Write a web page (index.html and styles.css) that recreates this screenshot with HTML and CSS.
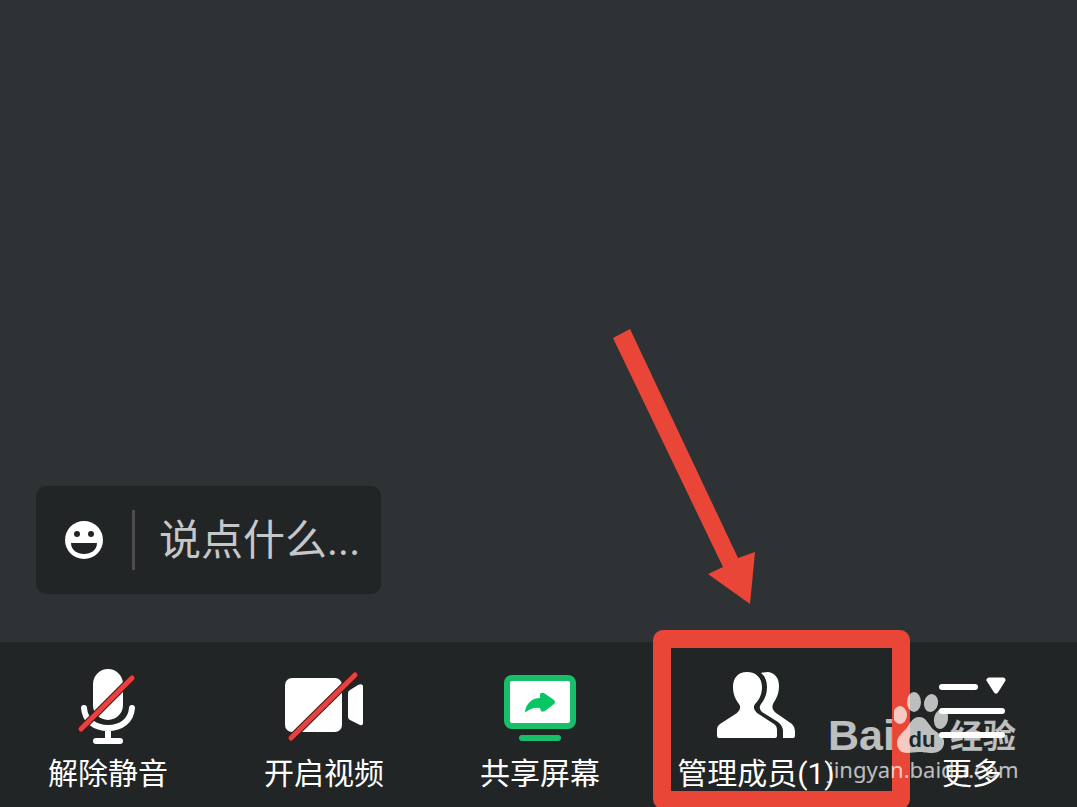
FILE: index.html
```html
<!DOCTYPE html>
<html lang="zh-CN">

<head>
    <meta charset="UTF-8">
    <meta name="viewport" content="width=device-width, initial-scale=1.0">
    <title>会议</title>
    <link rel="stylesheet" href="styles.css">
</head>

<body>
    <main class="stage">
        <form class="chat">
            <button type="button" class="emoji" aria-label="表情">
                <svg viewBox="0 0 38 38">
                    <circle cx="19" cy="19" r="19" fill="#fff" />
                    <circle cx="12" cy="13" r="3" fill="#222526" />
                    <circle cx="26" cy="13" r="3" fill="#222526" />
                    <path d="M6 22H32C32 29 26 33 19 33S6 29 6 22Z" fill="#222526" />
                </svg>
            </button>
            <input type="text" class="say" placeholder="说点什么..." aria-label="说点什么">
        </form>
    </main>

    <nav class="toolbar">
        <button type="button" class="tool">
            <svg class="icon" viewBox="0 0 96 80">
                <rect x="33" y="3" width="30" height="51" rx="15" fill="#fff" />
                <path d="M24 42C25 55 35 62 48 62S71 55 72 42M48 62V75" fill="none" stroke="#fff" stroke-width="6" stroke-linecap="round" />
                <rect x="33" y="72" width="30" height="6" rx="3" fill="#fff" />
                <path d="M21 63L72 12" stroke="#4a1417" stroke-width="7" stroke-linecap="round" />
                <path d="M21 63L72 12" stroke="#e5433f" stroke-width="5" stroke-linecap="round" />
            </svg>
            <span>解除静音</span>
        </button>
        <button type="button" class="tool">
            <svg class="icon" viewBox="0 0 96 80">
                <rect x="9" y="12" width="57" height="54" rx="7" fill="#fff" />
                <path d="M72 27Q72 25 74 24L82 19Q87 17 87 21V57Q87 61 82 58L74 54Q72 53 72 51Z" fill="#fff" />
                <path d="M15 72L79 9" stroke="#4a1417" stroke-width="7" stroke-linecap="round" />
                <path d="M15 72L79 9" stroke="#e5433f" stroke-width="5" stroke-linecap="round" />
            </svg>
            <span>开启视频</span>
        </button>
        <button type="button" class="tool">
            <svg class="icon" viewBox="0 0 96 80">
                <rect x="12" y="9" width="72" height="54" rx="8" fill="#18bf6b" />
                <rect x="18" y="15" width="60" height="42" rx="2" fill="#fff" />
                <rect x="27" y="69" width="42" height="6" rx="3" fill="#18bf6b" />
                <path d="M33 45C35 36 41 32 48 32V28Q49 26 52 27L62 34Q64 36 62 38L53 45Q50 46 49 45L48 42C42 41 38 43 34 46Q33 46 33 45Z" fill="#07c765" />
            </svg>
            <span>共享屏幕</span>
        </button>
        <button type="button" class="tool">
            <svg class="icon" viewBox="0 0 96 80">
                <path d="M39 6C30 6 25 12 25 21C25 29 28 34 31 38Q34 43 29 47L12 58Q9 60 9 64V70Q9 72 11 72H67Q69 72 69 70V64Q69 60 66 58L49 47Q44 43 47 38C51 34 54 29 54 21C54 12 48 6 39 6Z" fill="#fff" />
                <path d="M53 7Q57 6 60 6C67 7 71 12 71 20C71 28 68 33 65 38Q63 43 68 47L84 58Q87 61 87 65V70Q87 72 85 72H75V65Q75 60 70 56L54 46Q50 42 53 38C57 33 59 28 59 21C59 15 57 10 53 7Z" fill="#fff" />
            </svg>
            <span>管理成员(1)</span>
            <i class="highlight"></i>
            <svg class="arrow" viewBox="0 0 142 275">
                <path d="M0 9L17 0L125 229L142 223L137 275L95 245L110 238Z" fill="#e94637" />
            </svg>
        </button>
        <button type="button" class="tool">
            <svg class="icon" viewBox="0 0 96 80">
                <rect x="15" y="18" width="39" height="6" rx="3" fill="#fff" />
                <rect x="15" y="42" width="66" height="6" rx="3" fill="#fff" />
                <rect x="15" y="66" width="66" height="6" rx="3" fill="#fff" />
                <path d="M65 14H79L72 25Z" fill="#fff" stroke="#fff" stroke-width="5" stroke-linejoin="round" />
            </svg>
            <span>更多</span>
        </button>
    </nav>

    <div class="watermark">
        <div class="brand">
            <b class="bai">Bai</b>
            <svg class="paw" viewBox="66 0 56 66">
                <ellipse cx="72" cy="25" rx="7" ry="9" />
                <ellipse cx="86" cy="12" rx="7" ry="10" />
                <ellipse cx="103" cy="13" rx="7" ry="9" transform="rotate(12 103 13)" />
                <ellipse cx="113" cy="29" rx="7" ry="10" transform="rotate(12 113 29)" />
                <path d="M91 27C99 27 100 35 106 40C113 45 117 48 116 54C115 60 110 63 104 63C98 63 95 62 91 62S83 63 79 63C73 63 69 59 69 53C69 47 73 44 78 39C82 34 84 27 91 27Z" />
                <text class="du" x="94" y="57" text-anchor="middle">du</text>
            </svg>
            <b class="jingyan">经验</b>
        </div>
        <span class="site">jingyan.baidu.com</span>
    </div>
</body>

</html>
```
FILE: styles.css
```css
* {
    margin: 0;
    padding: 0;
    box-sizing: border-box;
}

body {
    min-height: 100vh;
    display: flex;
    flex-direction: column;
    position: relative;
    overflow: hidden;
    background-color: #2e3235;
    color: #fff;
    font-family: Roboto, "Noto Sans CJK SC", sans-serif;
}

button,
input {
    background: none;
    border: none;
    outline: none;
    color: inherit;
    font-family: inherit;
}

svg {
    display: block;
}

.stage {
    flex: 1;
    display: flex;
    align-items: flex-end;
    padding: 0 36px 48px;
}

/* Chat box */
.chat {
    width: 345px;
    height: 108px;
    display: flex;
    align-items: center;
    padding-left: 29px;
    border-radius: 10px;
    background-color: #222526;
}

.emoji {
    width: 38px;
    height: 38px;
}

.say {
    flex: 1;
    min-width: 0;
    height: 60px;
    margin-left: 29px;
    padding-left: 24px;
    border-left: 3px solid #4a4c4e;
    font-size: 42px;
}

.say::placeholder {
    color: #c6c7c8;
    opacity: 1;
}

/* Bottom bar */
.toolbar {
    display: grid;
    grid-template-columns: repeat(5, 1fr);
    margin-right: -3px;
    background-color: #222526;
}

.tool {
    position: relative;
    display: flex;
    flex-direction: column;
    align-items: center;
    gap: 8px;
    padding: 24px 0 13px;
    font-size: 30px;
    line-height: 40px;
    white-space: nowrap;
}

.icon {
    width: 96px;
    height: 80px;
}

.highlight {
    position: absolute;
    left: 5px;
    top: -12px;
    width: 257px;
    height: 179px;
    border: 18px solid #e94637;
    border-radius: 10px;
}

.arrow {
    position: absolute;
    left: -35px;
    top: -313px;
    width: 142px;
    height: 275px;
}

/* Watermark */
.watermark {
    position: absolute;
    right: 59px;
    bottom: 25px;
    width: 190px;
    opacity: 0.7;
    pointer-events: none;
}

.brand {
    display: flex;
    align-items: flex-end;
}

.bai {
    width: 66px;
    font-family: "Liberation Sans", sans-serif;
    font-size: 43px;
    line-height: 42px;
}

.paw {
    width: 56px;
    height: 66px;
    fill: #fff;
}

.paw .du {
    fill: #222526;
    font-family: "Liberation Sans", sans-serif;
    font-size: 22px;
    font-weight: bold;
}

.jingyan {
    font-size: 33px;
    line-height: 38px;
}

.site {
    display: block;
    font-family: "Noto Sans", sans-serif;
    font-size: 22px;
    line-height: 26px;
}
```
